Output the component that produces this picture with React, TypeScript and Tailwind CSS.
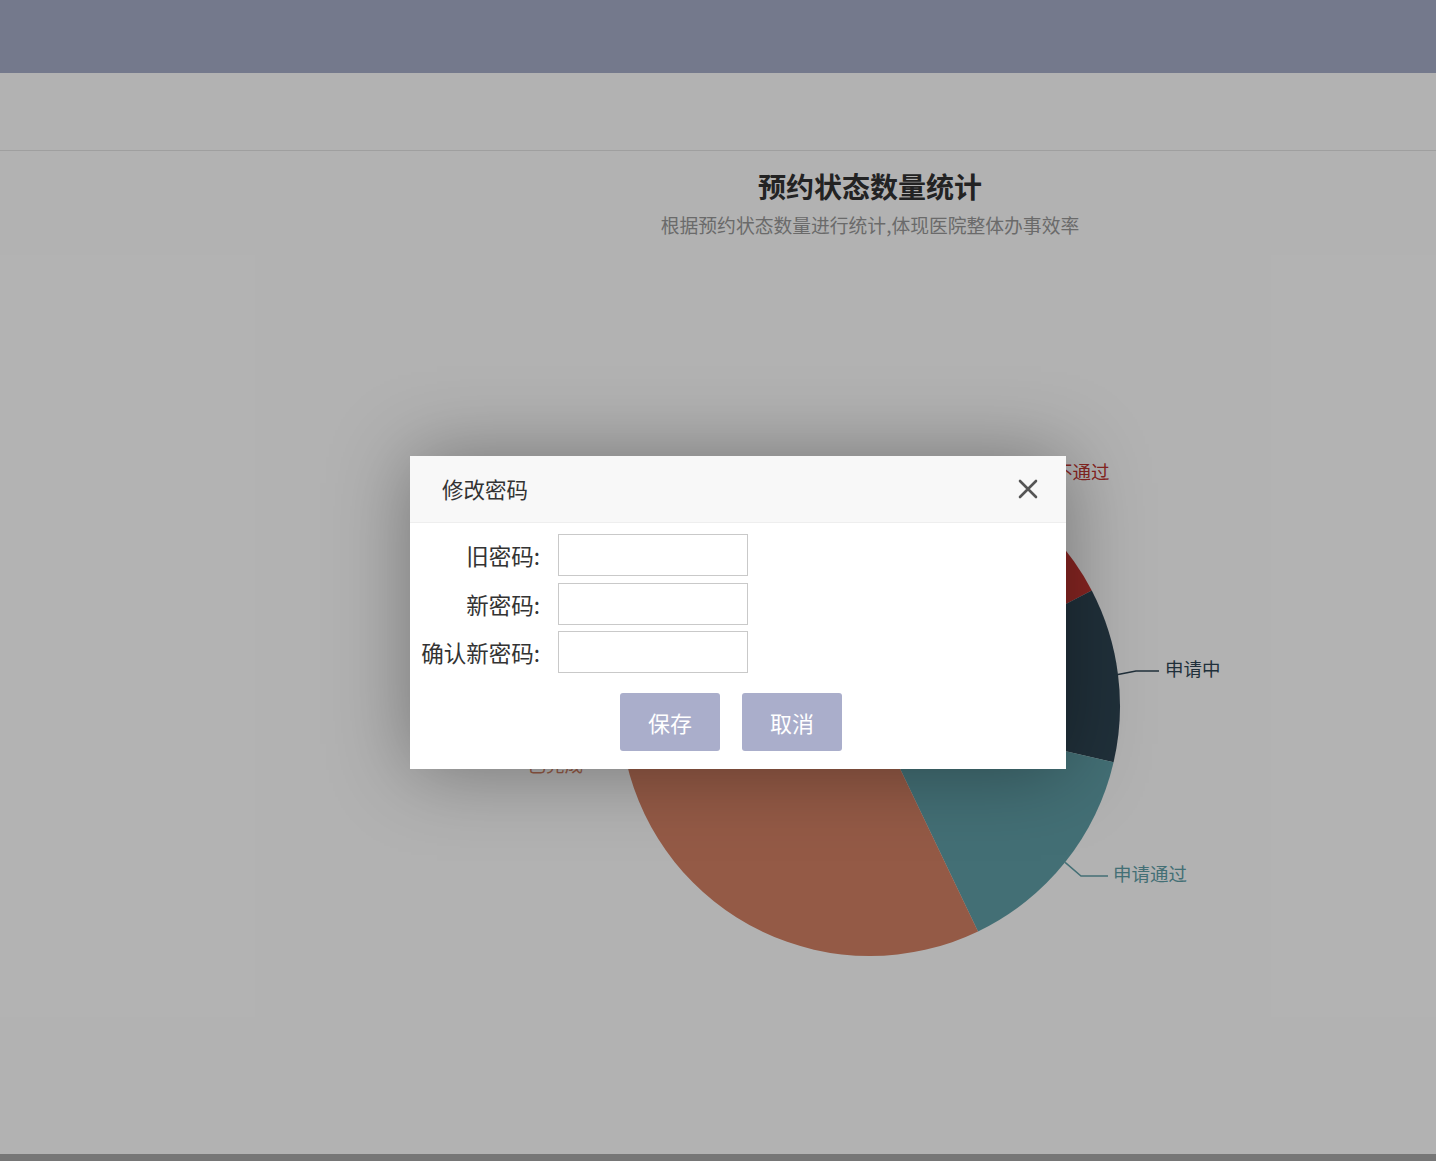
import React from "react";

type Slice = {
  name: string;
  color: string;
  a0: number;
  a1: number;
  elbow: [number, number];
  hEnd: number;
  tx: number;
  right: boolean;
};

const CX = 566;
const CY = 469;
const R = 250;

const slices: Slice[] = [
  { name: "不通过", color: "#c23531", a0: 0, a1: 62.5, elbow: [706, 237], hEnd: 745, tx: 750, right: true },
  { name: "申请中", color: "#2f4554", a0: 62.5, a1: 103, elbow: [832, 434], hEnd: 855, tx: 861, right: true },
  { name: "申请通过", color: "#61a0a8", a0: 103, a1: 154.4, elbow: [777, 639], hEnd: 804, tx: 809, right: true },
  { name: "已完成", color: "#d48265", a0: 154.4, a1: 360, elbow: [308, 530], hEnd: 284, tx: 279, right: false },
];

function pt(a: number, r: number) {
  const rad = (a * Math.PI) / 180;
  return [CX + r * Math.sin(rad), CY - r * Math.cos(rad)];
}

function arcPath(a0: number, a1: number) {
  const [x0, y0] = pt(a0, R);
  const [x1, y1] = pt(a1 - 0.0001, R);
  const large = a1 - a0 > 180 ? 1 : 0;
  return `M ${CX} ${CY} L ${x0} ${y0} A ${R} ${R} 0 ${large} 1 ${x1} ${y1} Z`;
}

function Pie() {
  return (
    <svg width="1132" height="720" viewBox="0 0 1132 720" className="block">
      {slices.map((s) => (
        <path key={s.name} d={arcPath(s.a0, s.a1)} fill={s.color} />
      ))}
      {slices.map((s) => {
        const mid = (s.a0 + s.a1) / 2;
        const [x0, y0] = pt(mid, R);
        return (
          <g key={s.name + "l"}>
            <polyline
              points={`${x0},${y0} ${s.elbow[0]},${s.elbow[1]} ${s.hEnd},${s.elbow[1]}`}
              fill="none"
              stroke={s.color}
              strokeWidth="1.5"
            />
            <text
              x={s.tx}
              y={s.elbow[1]}
              fill={s.color}
              fontSize="18.5"
              dominantBaseline="middle"
              textAnchor={s.right ? "start" : "end"}
              style={{ fontFamily: '"Noto Sans CJK SC", "Noto Sans", sans-serif' }}
            >
              {s.name}
            </text>
          </g>
        );
      })}
    </svg>
  );
}

function Row({ label }: { label: string }) {
  return (
    <div className="flex items-center">
      <div className="w-[130px] text-right text-[22.5px] leading-[42px] text-[#333]">{label}</div>
      <input className="ml-[18px] h-[42px] w-[190px] border border-[#c9c9c9] bg-white outline-none" />
    </div>
  );
}

export default function App() {
  return (
    <div
      className="relative flex h-[1161px] w-full flex-col overflow-hidden bg-white"
      style={{ fontFamily: '"Noto Sans CJK SC", "Noto Sans", sans-serif' }}
    >
      <div className="h-[73px] shrink-0 bg-[#a6aec9]" />
      <div className="h-[78px] shrink-0 border-b border-[#e4e4e4] bg-white" />
      <div className="flex flex-1 flex-col">
        <div className="ml-[304px] flex w-[1132px] flex-col items-center pt-[18px]">
          <div className="text-[28px] font-bold leading-[34px] text-[#333]">预约状态数量统计</div>
          <div className="mt-[10px] text-[18.8px] leading-[24px] text-[#999]">
            根据预约状态数量进行统计,体现医院整体办事效率
          </div>
          <Pie />
        </div>
      </div>
      <div className="h-[7px] shrink-0 bg-[#aaaaaa]" />

      <div className="absolute inset-0 bg-black/30" />

      <div className="absolute left-[410px] top-[456px] w-[656px] bg-white shadow-[1px_1px_75px_rgba(0,0,0,0.35)]">
        <div className="flex h-[67px] items-center justify-between border-b border-[#eeeeee] bg-[#f8f8f8] pl-[32px] pr-[28px]">
          <span className="text-[21.5px] text-[#333]">修改密码</span>
          <svg width="20" height="20" viewBox="0 0 20 20">
            <path d="M2 2 L18 18 M18 2 L2 18" stroke="#555" strokeWidth="2.6" strokeLinecap="round" />
          </svg>
        </div>
        <div className="flex flex-col gap-[6.5px] pt-[11px]">
          <Row label="旧密码:" />
          <Row label="新密码:" />
          <Row label="确认新密码:" />
        </div>
        <div className="flex justify-center gap-[22px] pb-[18px] pr-[14px] pt-[20px]">
          <button className="h-[58px] w-[100px] rounded-[3px] bg-[#aaaecb] text-[22px] text-white">保存</button>
          <button className="h-[58px] w-[100px] rounded-[3px] bg-[#aaaecb] text-[22px] text-white">取消</button>
        </div>
      </div>
    </div>
  );
}
